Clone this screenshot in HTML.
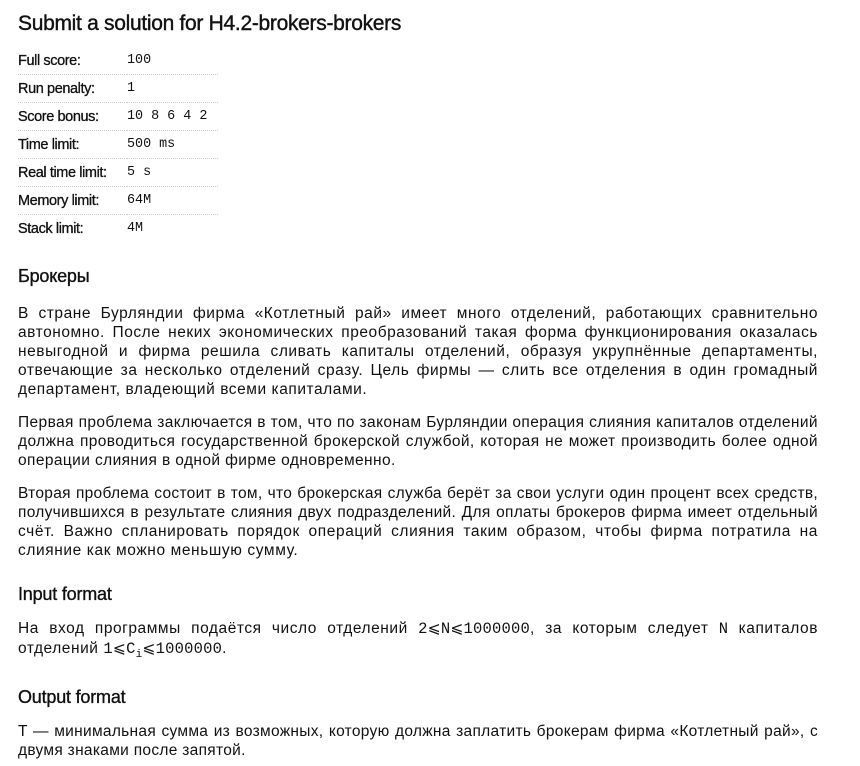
<!DOCTYPE html>
<html><head><meta charset="utf-8"><style>
body{margin:0;background:#fff;color:#111;font-family:"Liberation Sans","DejaVu Sans",sans-serif;}
h1{font-size:21px;font-weight:normal;margin:0;position:absolute;left:18px;top:12px;letter-spacing:-0.3px;-webkit-text-stroke:0.4px #111;}
table{position:absolute;left:18px;top:47px;border-collapse:collapse;font-size:14.5px;}
td{height:27px;border-bottom:1px dotted #ccc;padding:0;vertical-align:middle;}
td.k{width:109px;letter-spacing:-0.4px;-webkit-text-stroke:0.3px #111;}
td.v{width:91px;font-family:"Liberation Mono",monospace;font-size:13.4px;}
tr:last-child td{border-bottom:none;}
h2{font-size:18px;font-weight:normal;margin:0;position:absolute;left:18px;letter-spacing:-0.2px;-webkit-text-stroke:0.35px #111;}
p{margin:0;position:absolute;left:18px;width:800px;font-size:15.5px;letter-spacing:0.4px;line-height:19px;text-align:justify;}
.m{font-family:"Liberation Mono",monospace;font-size:15.5px;letter-spacing:0.2px;}
</style></head><body>
<h1>Submit a solution for H4.2-brokers-brokers</h1>
<table>
<tr><td class="k">Full score:</td><td class="v">100</td></tr>
<tr><td class="k">Run penalty:</td><td class="v">1</td></tr>
<tr><td class="k">Score bonus:</td><td class="v">10 8 6 4 2</td></tr>
<tr><td class="k">Time limit:</td><td class="v">500 ms</td></tr>
<tr><td class="k">Real time limit:</td><td class="v">5 s</td></tr>
<tr><td class="k">Memory limit:</td><td class="v">64M</td></tr>
<tr><td class="k">Stack limit:</td><td class="v">4M</td></tr>
</table>
<h2 style="top:266px">Брокеры</h2>
<p style="top:304px;letter-spacing:0.55px">В стране Бурляндии фирма «Котлетный рай» имеет много отделений, работающих сравнительно автономно. После неких экономических преобразований такая форма функционирования оказалась невыгодной и фирма решила сливать капиталы отделений, образуя укрупнённые департаменты, отвечающие за несколько отделений сразу. Цель фирмы — слить все отделения в один громадный департамент, владеющий всеми капиталами.</p>
<p style="top:413px">Первая проблема заключается в том, что по законам Бурляндии операция слияния капиталов отделений должна проводиться государственной брокерской службой, которая не может производить более одной операции слияния в одной фирме одновременно.</p>
<p style="top:484px;letter-spacing:0.3px">Вторая проблема состоит в том, что брокерская служба берёт за свои услуги один процент всех средств, получившихся в результате слияния двух подразделений. Для оплаты брокеров фирма имеет отдельный <span style="letter-spacing:0.6px">счёт. Важно спланировать порядок операций слияния таким образом, чтобы фирма потратила на слияние как можно меньшую сумму.</span></p>
<h2 style="top:584px">Input format</h2>
<p style="top:619px;letter-spacing:0.55px">На вход программы подаётся число отделений <span class="m">2⩽N⩽1000000</span>, за которым следует <span class="m">N</span> капиталов отделений <span class="m">1⩽C<sub style="font-size:11px">i</sub>⩽1000000</span>.</p>
<h2 style="top:687px">Output format</h2>
<p style="top:722px;letter-spacing:0.3px">T — минимальная сумма из возможных, которую должна заплатить брокерам фирма «Котлетный рай», с двумя знаками после запятой.</p>
</body></html>
